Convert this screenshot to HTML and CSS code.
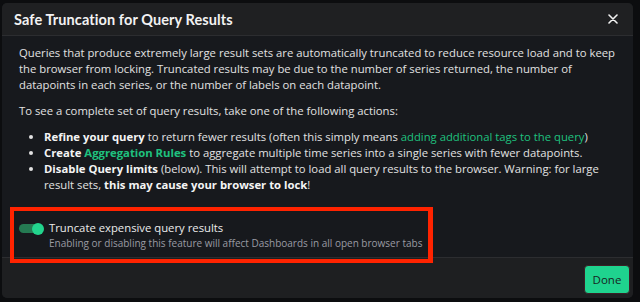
FILE: index.html
```html
<!DOCTYPE html>
<html>
<head>
<meta charset="utf-8">
<link rel="stylesheet" href="styles.css">
</head>
<body>
<div class="modal">
  <div class="header">
    <h1 class="title">Safe Truncation for Query Results</h1>
    <svg class="close" width="10" height="10" viewBox="0 0 10 10"><path d="M1 1L9 9M9 1L1 9" stroke="#f2f2f2" stroke-width="1.6" stroke-linecap="round"/></svg>
  </div>
  <div class="body">
    <p class="para">Queries that produce extremely large result sets are automatically truncated to reduce resource load and to keep the browser from locking. Truncated results may be due to the number of series returned, the number of datapoints in each series, or the number of labels on each datapoint.</p>
    <p class="para">To see a complete set of query results, take one of the following actions:</p>
    <ul class="list">
      <li><b>Refine your query</b> to return fewer results (often this simply means <span class="link">adding additional tags to the query</span>)</li>
      <li><b>Create <span class="link">Aggregation Rules</span></b> to aggregate multiple time series into a single series with fewer datapoints.</li>
      <li><b>Disable Query limits</b> <span>(below). This will attempt to load all query results to the browser. Warning: for large</span> <span>result sets,</span> <b>this may cause your browser to lock</b>!</li>
    </ul>
    <div class="setting">
      <div class="toggle"><span class="knob"></span></div>
      <div class="setting-text">
        <div class="setting-label">Truncate expensive query results</div>
        <div class="setting-desc">Enabling or disabling this feature will affect Dashboards in all open browser tabs</div>
      </div>
    </div>
  </div>
  <div class="footer">
    <button class="done">Done</button>
  </div>
  <div class="highlight"></div>
</div>
</body>
</html>
```

FILE: styles.css
```css
html, body {
  margin: 0;
  padding: 0;
  background: #0c0d0f;
  font-family: "Open Sans", "DejaVu Sans", sans-serif;
}
.modal {
  position: relative;
  margin: 3px 7px 0 2px;
  width: 631px;
  height: 295px;
  border-radius: 5px;
  overflow: hidden;
  display: flex;
  flex-direction: column;
  background: #17191d;
}
.header {
  height: 32px;
  flex: none;
  background: #1f2022;
  border-bottom: 1px solid #2c2d30;
  display: flex;
  align-items: center;
  justify-content: space-between;
  padding: 0 15px 0 12px;
}
.title {
  margin: 0;
  font-family: "Lato", "Open Sans", sans-serif;
  font-size: 14.5px;
  font-weight: 700;
  color: #f2f2f2;
  letter-spacing: 0.1px;
}
.close { display: block; }
.body {
  flex: 1;
  padding: 9px 8px 0 17px;
  color: #e2e2e2;
  font-size: 11.3px;
  line-height: 16px;
}
.para {
  margin: 0 0 10px 0;
}
.list {
  margin: 0;
  padding-left: 25px;
}
.list li { line-height: 16px; }
.list b { font-weight: 700; color: #f4f4f4; }
.link { color: #1fc17f; }
.setting {
  display: flex;
  align-items: flex-start;
  margin-top: 27px;
  gap: 6px;
}
.toggle {
  position: relative;
  width: 22px;
  height: 9px;
  margin-top: 4px;
  border-radius: 5px;
  background: #257a52;
}
.knob {
  position: absolute;
  right: -3px;
  top: -1.5px;
  width: 12px;
  height: 12px;
  border-radius: 50%;
  background: #22d48d;
}
.setting-text { margin-left: 2px; }
.setting-label {
  font-size: 11.3px;
  color: #ececec;
  line-height: 16px;
}
.setting-desc {
  font-size: 10px;
  color: #9a9ba3;
  line-height: 15px;
}
.footer {
  height: 40px;
  flex: none;
  background: #1e1f21;
  border-top: 1px solid #2c2d30;
  display: flex;
  align-items: center;
  justify-content: flex-end;
  padding-right: 3px;
}
.done {
  width: 46px;
  height: 29px;
  border: 1px solid #3b1f26;
  border-radius: 4px;
  background: #1fd38e;
  color: #17231e;
  font-family: inherit;
  font-size: 11.5px;
  padding: 0;
  margin-top: 3px;
}
.highlight {
  position: absolute;
  left: 8px;
  top: 204px;
  width: 414px;
  height: 48px;
  border: 4px solid #ff2300;
  border-right-width: 5px;
}
```
